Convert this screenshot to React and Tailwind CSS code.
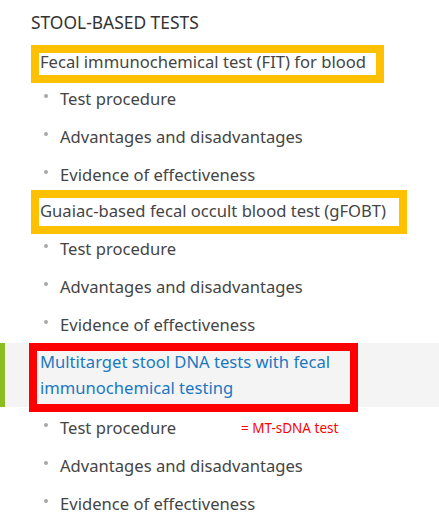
const groups = ['Test procedure', 'Advantages and disadvantages', 'Evidence of effectiveness'];

function Item({ children, note }) {
  return (
    <li className="flex items-center h-[24px]">
      <span className="w-[4px] h-[4px] rounded-full bg-[#a8a8a8] -mt-[6px]" />
      <span className="ml-[12px] w-[181px] whitespace-nowrap">{children}</span>
      {note && <span className="text-[13.5px] text-[#ff0000] whitespace-nowrap">{note}</span>}
    </li>
  );
}

function SubList({ className, note }) {
  return (
    <ul className={`flex flex-col gap-[14px] pl-[44px] text-[16.6px] leading-[24px] text-[#454545] ${className}`}>
      {groups.map((g, i) => (
        <Item key={g} note={i === 0 ? note : null}>
          {g}
        </Item>
      ))}
    </ul>
  );
}

export default function App() {
  return (
    <div className="w-[439px] h-[526px] bg-white overflow-hidden font-['Noto_Sans',sans-serif]">
      <h2 className="pl-[31px] pt-[10px] text-[17.4px] leading-[24px] text-[#333]">STOOL-BASED TESTS</h2>

      {/* FIT */}
      <div className="mt-[11px] ml-[31px] w-[353px] border-8 border-[#ffc000]">
        <div className="pl-[1px] pb-[5px] text-[16.6px] leading-[17px] text-[#454545] whitespace-nowrap">
          Fecal immunochemical test (FIT) for blood
        </div>
      </div>
      <SubList className="pt-[4px]" />

      {/* gFOBT */}
      <div className="mt-[3px] ml-[31px] w-[376px] border-8 border-[#ffc000]">
        <div className="pl-[1px] pt-[1px] pb-[3px] text-[16.6px] leading-[24px] text-[#454545] whitespace-nowrap">
          Guaiac-based fecal occult blood test (gFOBT)
        </div>
      </div>
      <SubList className="pt-[3px]" />

      {/* MT-sDNA, active item */}
      <div className="mt-[6px] flex bg-[#f4f4f4]">
        <div className="w-[5px] bg-[#8bbd22]" />
        <div className="ml-[24px] -mb-[5px] w-[329px] border-8 border-[#ff0000]">
          <div className="pl-[3px] -mt-[2px] pb-[3px] text-[16.6px] leading-[26px] text-[#1a78c2] whitespace-nowrap">
            Multitarget stool DNA tests with fecal
            <br />
            immunochemical testing
          </div>
        </div>
      </div>
      <SubList className="pt-[9px]" note="= MT-sDNA test" />
    </div>
  );
}
